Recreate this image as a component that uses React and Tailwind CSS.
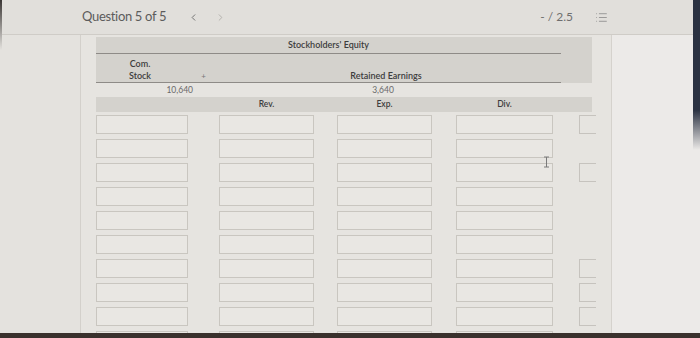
import { List, ChevronLeft, ChevronRight } from 'lucide-react';

const rowHasLast = [true, false, true, false, false, false, true, true, true, false];

function Box({ className = '' }) {
  return <div className={`h-[19px] border border-[#c9c6c0] bg-[#e9e7e3] ${className}`}></div>;
}

function InputRow({ last }) {
  return (
    <div className="flex h-[19px] shrink-0">
      <Box className="w-[92px]" />
      <Box className="ml-[31px] w-[95px]" />
      <Box className="ml-[23px] w-[95px]" />
      <Box className="ml-[24px] w-[97px]" />
      {last && <div className="ml-[26px] h-[19px] w-[17px] border-y border-l border-[#c6c3be]"></div>}
    </div>
  );
}

export default function App() {
  return (
    <div className="w-[700px] h-[338px] overflow-hidden bg-[#e6e4e0] relative flex flex-col" style={{ fontFamily: 'Lato, "Open Sans", sans-serif' }}>
      <div className="flex flex-1 min-h-0">
        {/* left photo edge */}
        <div className="w-[2px] shrink-0 flex flex-col">
          <div className="h-[50px] bg-[linear-gradient(to_bottom,#3a3634,#e4e2de)]"></div>
          <div className="flex-1 bg-[#e4e2de]"></div>
        </div>

        <div className="flex-1 min-w-0 flex flex-col">
          {/* top bar */}
          <div className="h-[35px] shrink-0 flex items-center bg-[#e1dfdb] border-b border-[#cfccc7] pl-[80px] pr-[85px]">
            <span className="text-[13px] text-[#5c5c5c] tracking-tight">Question 5 of 5</span>
            <ChevronLeft className="ml-[22px] w-[11px] h-[11px] text-[#6a6a6a]" strokeWidth={2} />
            <ChevronRight className="ml-[16px] w-[11px] h-[11px] text-[#b0aeaa]" strokeWidth={2} />
            <span className="ml-auto text-[12px] text-[#6e6e6e]">- / 2.5</span>
            <List className="ml-[22px] w-[13px] h-[13px] text-[#8a8a8a]" strokeWidth={1.5} />
          </div>

          {/* body */}
          <div className="flex flex-1 min-h-0">
            <div className="w-[79px] shrink-0 border-r border-[#d3d0cb] bg-[#e4e2de]"></div>
            <div className="w-[531px] shrink-0 border-r border-[#d5d2cd] pl-[15px] pt-[2px] flex flex-col overflow-hidden text-[#3d3d3d] relative">
              {/* header */}
              <div className="w-[496px] bg-[#d4d2cd] shrink-0">
                <div className="w-[465px] h-[17px] border-b border-[#8e8b87] flex items-center justify-center text-[9px] font-semibold">
                  Stockholders' Equity
                </div>
                <div className="w-[465px] h-[29px] border-b border-[#8e8b87] flex items-end text-[9px] font-semibold leading-[12px]">
                  <div className="w-[92px] text-center pr-[4px]">Com.<br />Stock</div>
                  <div className="w-[31px] text-center text-[8px] font-normal text-[#777]">+</div>
                  <div className="w-[334px] text-center">Retained Earnings</div>
                </div>
              </div>
              <div className="h-[14px] shrink-0 flex items-center text-[8.5px] text-[#6a6a6a]">
                <div className="w-[97px] text-right">10,640</div>
                <div className="ml-[26px] w-[334px] text-center pr-[6px]">3,640</div>
              </div>
              <div className="w-[496px] h-[15px] shrink-0 bg-[#d4d2cd] flex items-center text-[8.5px] font-semibold">
                <div className="ml-[123px] w-[95px] text-center">Rev.</div>
                <div className="ml-[23px] w-[95px] text-center">Exp.</div>
                <div className="ml-[24px] w-[97px] text-center">Div.</div>
              </div>
              {/* inputs */}
              <div className="mt-[3px] flex flex-col gap-[5px]">
                {rowHasLast.map((l, i) => (
                  <InputRow key={i} last={l} />
                ))}
              </div>
              {/* text cursor */}
              <svg className="absolute left-[462px] top-[121px]" width="7" height="12" viewBox="0 0 7 12">
                <path d="M1 1h5M3.5 1v10M1 11h5" stroke="#7a7a7a" strokeWidth="1" fill="none" />
              </svg>
            </div>
            <div className="flex-1 bg-[#eceae8]"></div>
          </div>
        </div>

        {/* right photo edge */}
        <div className="w-[7px] shrink-0 flex flex-col">
          <div className="h-[110px] bg-[#2b3242]"></div>
          <div className="h-[40px] bg-[linear-gradient(to_bottom,#2b3242,#eceae8)]"></div>
          <div className="flex-1 bg-[#eceae8]"></div>
        </div>
      </div>

      {/* bottom bezel */}
      <div className="h-[5px] shrink-0 bg-[#3a312d]"></div>
    </div>
  );
}
